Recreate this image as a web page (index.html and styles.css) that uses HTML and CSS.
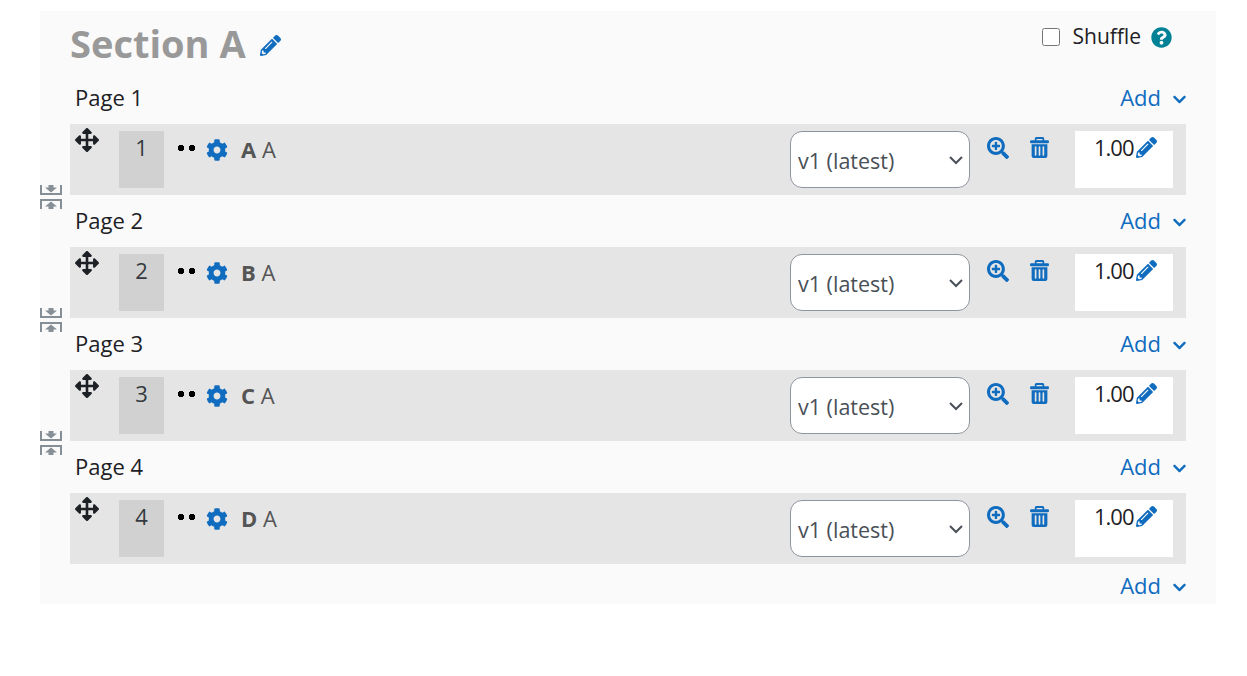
FILE: index.html
```html
<!DOCTYPE html>
<html lang="en">
<head>
    <meta charset="UTF-8">
    <meta name="viewport" content="width=device-width, initial-scale=1.0">
    <title>Section A</title>
    <link rel="stylesheet" href="styles.css">
</head>
<body>
    <svg class="defs" width="0" height="0">
        <symbol id="i-pencil" viewBox="0 0 512 512"><path d="M497.9 142.1l-46.1 46.1c-4.7 4.7-12.3 4.7-17 0l-111-111c-4.7-4.7-4.7-12.3 0-17l46.1-46.1c18.7-18.7 49.1-18.7 67.9 0l60.1 60.1c18.8 18.7 18.8 49.1 0 67.9zM284.2 99.8L21.6 362.4.4 483.9c-2.9 16.4 11.4 30.6 27.8 27.8l121.5-21.3 262.6-262.6c4.7-4.7 4.7-12.3 0-17l-111-111c-4.8-4.7-12.4-4.7-17.1 0zM124.1 339.9c-5.5-5.5-5.5-14.3 0-19.8l154-154c5.5-5.5 14.3-5.5 19.8 0s5.5 14.3 0 19.8l-154 154c-5.5 5.5-14.3 5.5-19.8 0zM88 424h48v36.3l-64.5 11.3-31.1-31.1L51.7 376H88v48z"/></symbol>
        <symbol id="i-cog" viewBox="0 0 512 512"><path d="M487.4 315.7l-42.6-24.6c4.3-23.2 4.3-47 0-70.2l42.6-24.6c4.9-2.8 7.1-8.6 5.5-14-11.1-35.6-30-67.8-54.7-94.6-3.8-4.1-10-5.1-14.8-2.3L380.8 110c-17.9-15.4-38.5-27.3-60.8-35.1V25.8c0-5.6-3.9-10.5-9.4-11.7-36.7-8.2-74.3-7.8-109.2 0-5.5 1.2-9.4 6.1-9.4 11.7V75c-22.2 7.9-42.8 19.8-60.8 35.1L88.7 85.5c-4.9-2.8-11-1.9-14.8 2.3-24.7 26.7-43.6 58.9-54.7 94.6-1.7 5.4.6 11.2 5.5 14L67.3 221c-4.3 23.2-4.3 47 0 70.2l-42.6 24.6c-4.9 2.8-7.1 8.6-5.5 14 11.1 35.6 30 67.8 54.7 94.6 3.8 4.1 10 5.1 14.8 2.3l42.6-24.6c17.9 15.4 38.5 27.3 60.8 35.1v49.2c0 5.6 3.9 10.5 9.4 11.7 36.7 8.2 74.3 7.8 109.2 0 5.5-1.2 9.4-6.1 9.4-11.7v-49.2c22.2-7.9 42.8-19.8 60.8-35.1l42.6 24.6c4.9 2.8 11 1.9 14.8-2.3 24.7-26.7 43.6-58.9 54.7-94.6 1.5-5.5-.7-11.3-5.6-14.1zM256 336c-44.1 0-80-35.9-80-80s35.9-80 80-80 80 35.9 80 80-35.9 80-80 80z"/></symbol>
        <symbol id="i-zoom" viewBox="0 0 512 512"><path d="M304 192v32c0 6.6-5.4 12-12 12h-56v56c0 6.6-5.4 12-12 12h-32c-6.6 0-12-5.4-12-12v-56h-56c-6.6 0-12-5.4-12-12v-32c0-6.6 5.4-12 12-12h56v-56c0-6.6 5.4-12 12-12h32c6.6 0 12 5.4 12 12v56h56c6.6 0 12 5.4 12 12zm201 284.7L476.7 505c-9.4 9.4-24.6 9.4-33.9 0L343 405.3c-4.5-4.5-7-10.6-7-17V372c-35.3 27.6-79.7 44-128 44C93.1 416 0 322.9 0 208S93.1 0 208 0s208 93.1 208 208c0 48.3-16.4 92.7-44 128h16.3c6.4 0 12.5 2.5 17 7l99.7 99.7c9.3 9.4 9.3 24.6 0 34zM344 208c0-75.2-60.8-136-136-136S72 132.8 72 208s60.8 136 136 136 136-60.8 136-136z"/></symbol>
        <symbol id="i-trash" viewBox="0 0 18 20"><path d="M6 0h6a1.5 1.5 0 0 1 1.5 1.5V3H17a1 1 0 0 1 1 1v1a1 1 0 0 1-1 1H1a1 1 0 0 1-1-1V4a1 1 0 0 1 1-1h3.500V1.500A1.500 1.500 0 0 1 6 0zm.200 1.800V3h5.600V1.800zM1.500 7h15v11a2 2 0 0 1-2 2h-11a2 2 0 0 1-2-2zm3 2.500v7.500a.8.8 0 0 0 1.600 0V9.500a.8.8 0 0 0-1.600 0zm3.700 0v7.500a.8.8 0 0 0 1.600 0V9.500a.8.8 0 0 0-1.600 0zm3.700 0v7.500a.8.8 0 0 0 1.600 0V9.500a.8.8 0 0 0-1.600 0z"/></symbol>
        <symbol id="i-help" viewBox="0 0 512 512"><path d="M504 256c0 136.997-111.043 248-248 248S8 392.997 8 256C8 119.083 119.043 8 256 8s248 111.083 248 248zM262.655 90c-54.497 0-89.255 22.957-116.549 63.758-3.536 5.286-2.353 12.415 2.715 16.258l34.699 26.31c5.205 3.947 12.621 3.008 16.665-2.122 17.864-22.658 30.113-35.797 57.303-35.797 20.429 0 45.698 13.148 45.698 32.958 0 14.976-12.363 22.667-32.534 33.976C247.128 238.528 216 254.941 216 296v4c0 6.627 5.373 12 12 12h56c6.627 0 12-5.373 12-12v-1.333c0-28.462 83.186-29.647 83.186-106.667 0-58.002-60.165-102-116.531-102zM256 338c-25.365 0-46 20.635-46 46 0 25.364 20.635 46 46 46s46-20.636 46-46c0-25.365-20.635-46-46-46z"/></symbol>
        <symbol id="i-move" viewBox="0 0 512 512"><path d="M352.201 425.775l-79.196 79.196c-9.373 9.373-24.568 9.373-33.941 0l-79.196-79.196c-15.119-15.119-4.411-40.971 16.971-40.97h51.162L228 284H127.196v51.162c0 21.382-25.851 32.09-40.971 16.971L7.029 272.937c-9.373-9.373-9.373-24.569 0-33.941L86.225 159.8c15.119-15.119 40.971-4.411 40.971 16.971V228H228V127.196h-51.23c-21.382 0-32.09-25.851-16.971-40.971l79.196-79.196c9.373-9.373 24.568-9.373 33.941 0l79.196 79.196c15.119 15.119 4.411 40.971-16.971 40.971h-51.162V228h100.804v-51.162c0-21.382 25.851-32.09 40.97-16.971l79.196 79.196c9.373 9.373 9.373 24.569 0 33.941L425.773 352.2c-15.119 15.119-40.971 4.411-40.97-16.971V284H284v100.804h51.23c21.382 0 32.09 25.851 16.971 40.971z"/></symbol>
        <symbol id="i-chevron" viewBox="0 0 448 512"><path d="M207.029 381.476L12.686 187.132c-9.373-9.373-9.373-24.569 0-33.941l22.667-22.667c9.357-9.357 24.522-9.375 33.901-.04L224 284.505l154.745-154.021c9.379-9.335 24.544-9.317 33.901.04l22.667 22.667c9.373 9.373 9.373 24.569 0 33.941L240.971 381.476c-9.373 9.372-24.569 9.372-33.942 0z"/></symbol>
        <symbol id="i-join" viewBox="0 0 22 24"><path d="M0 0h2v8h18V0h2v10H0zM8.500 0h5v2.500H17l-6 5-6-5h3.500zM0 14h22v10h-2v-8H2v8H0zM11 16.500l6 5h-3.500V24h-5v-2.500H5z"/></symbol>
    </svg>

    <div class="section">
        <div class="section-head">
            <h1>Section A</h1>
            <svg class="icon title-edit"><use href="#i-pencil"/></svg>
            <label class="shuffle">
                <input type="checkbox">
                <span>Shuffle</span>
            </label>
            <svg class="icon help"><use href="#i-help"/></svg>
        </div>

        <div class="page-line">
            <span class="page-name">Page 1</span>
            <a class="add">Add <svg class="icon chevron"><use href="#i-chevron"/></svg></a>
        </div>
        <div class="slot">
            <svg class="icon move"><use href="#i-move"/></svg>
            <div class="num">1</div>
            <span class="dots"></span>
            <svg class="icon cog"><use href="#i-cog"/></svg>
            <div class="name"><b>A</b> A</div>
            <select class="version"><option>v1 (latest)</option></select>
            <svg class="icon zoom"><use href="#i-zoom"/></svg>
            <svg class="icon trash"><use href="#i-trash"/></svg>
            <div class="mark">1.00<svg class="icon mark-edit"><use href="#i-pencil"/></svg></div>
        </div>

        <div class="page-line">
            <svg class="join"><use href="#i-join"/></svg>
            <span class="page-name">Page 2</span>
            <a class="add">Add <svg class="icon chevron"><use href="#i-chevron"/></svg></a>
        </div>
        <div class="slot">
            <svg class="icon move"><use href="#i-move"/></svg>
            <div class="num">2</div>
            <span class="dots"></span>
            <svg class="icon cog"><use href="#i-cog"/></svg>
            <div class="name"><b>B</b> A</div>
            <select class="version"><option>v1 (latest)</option></select>
            <svg class="icon zoom"><use href="#i-zoom"/></svg>
            <svg class="icon trash"><use href="#i-trash"/></svg>
            <div class="mark">1.00<svg class="icon mark-edit"><use href="#i-pencil"/></svg></div>
        </div>

        <div class="page-line">
            <svg class="join"><use href="#i-join"/></svg>
            <span class="page-name">Page 3</span>
            <a class="add">Add <svg class="icon chevron"><use href="#i-chevron"/></svg></a>
        </div>
        <div class="slot">
            <svg class="icon move"><use href="#i-move"/></svg>
            <div class="num">3</div>
            <span class="dots"></span>
            <svg class="icon cog"><use href="#i-cog"/></svg>
            <div class="name"><b>C</b> A</div>
            <select class="version"><option>v1 (latest)</option></select>
            <svg class="icon zoom"><use href="#i-zoom"/></svg>
            <svg class="icon trash"><use href="#i-trash"/></svg>
            <div class="mark">1.00<svg class="icon mark-edit"><use href="#i-pencil"/></svg></div>
        </div>

        <div class="page-line">
            <svg class="join"><use href="#i-join"/></svg>
            <span class="page-name">Page 4</span>
            <a class="add">Add <svg class="icon chevron"><use href="#i-chevron"/></svg></a>
        </div>
        <div class="slot">
            <svg class="icon move"><use href="#i-move"/></svg>
            <div class="num">4</div>
            <span class="dots"></span>
            <svg class="icon cog"><use href="#i-cog"/></svg>
            <div class="name"><b>D</b> A</div>
            <select class="version"><option>v1 (latest)</option></select>
            <svg class="icon zoom"><use href="#i-zoom"/></svg>
            <svg class="icon trash"><use href="#i-trash"/></svg>
            <div class="mark">1.00<svg class="icon mark-edit"><use href="#i-pencil"/></svg></div>
        </div>

        <div class="last-line">
            <a class="add">Add <svg class="icon chevron"><use href="#i-chevron"/></svg></a>
        </div>
    </div>
</body>
</html>
```

FILE: styles.css
```css
* {
    box-sizing: border-box;
}

body {
    margin: 0;
    padding: 11px 31px 0 40px;
    background: #fff;
    color: #1d2125;
    font-family: "Open Sans", "Noto Sans", sans-serif;
    font-size: 22px;
}

.defs {
    position: absolute;
}

.icon {
    display: block;
    flex: none;
    fill: #0f6cbf;
}

.section {
    background: #fafafa;
    padding: 0 30px;
    height: 593px;
}

.section-head {
    display: flex;
    height: 61px;
    align-items: flex-start;
}

h1 {
    margin: 8px 0 0;
    font-size: 38px;
    line-height: 48px;
    font-weight: 700;
    color: #999;
}

.title-edit {
    width: 21px;
    height: 21px;
    margin: 24px 0 0 14px;
}

.shuffle {
    display: flex;
    align-items: center;
    margin: 11px 0 0 auto;
    font-size: 21px;
}

.shuffle input {
    width: 18px;
    height: 18px;
    margin: 2px 13px 0 0;
}

.help {
    width: 21px;
    height: 21px;
    margin: 16px 14px 0 10px;
    fill: #008196;
}

.page-line {
    position: relative;
    display: flex;
    align-items: center;
    justify-content: space-between;
    height: 52px;
    padding: 0 0 0 5px;
}

.page-name {
    padding-bottom: 2px;
}

.join {
    position: absolute;
    left: -30px;
    top: -10px;
    width: 22px;
    height: 24px;
    fill: #868e96;
}

.add {
    display: flex;
    align-items: center;
    padding-bottom: 2px;
    color: #0f6cbf;
}

.chevron {
    width: 13px;
    height: 15px;
    margin: 4px 0 0 12px;
}

.slot {
    display: flex;
    align-items: flex-start;
    height: 71px;
    padding: 7px 13px 7px 5px;
    background: #e5e5e5;
}

.move {
    width: 24px;
    height: 24px;
    margin: -3px 20px 0 0;
    fill: #1d2125;
}

.num {
    width: 45px;
    height: 57px;
    background: #d1d1d1;
    text-align: center;
    line-height: 33px;
    color: #343a40;
}

.dots {
    width: 17px;
    height: 6px;
    margin: 14px 0 0 14px;
    background: radial-gradient(circle at 3px 3px, #000 3px, transparent 3.5px), radial-gradient(circle at 14px 3px, #000 3px, transparent 3.5px);
}

.cog {
    width: 22px;
    height: 22px;
    margin: 8px 0 0 11px;
}

.name {
    flex: 1;
    margin-left: 13px;
    line-height: 36px;
    color: #555;
}

.version {
    width: 180px;
    height: 57px;
    padding: 2px 0 0 7px;
    border: 1px solid #8f959e;
    border-radius: 12px;
    background: #fff url("data:image/svg+xml,%3Csvg xmlns='http://www.w3.org/2000/svg' viewBox='0 0 16 10'%3E%3Cpath d='M2 2l6 6 6-6' fill='none' stroke='%23495057' stroke-width='2'/%3E%3C/svg%3E") no-repeat right 5px center / 16px 10px;
    color: #495057;
    font-family: inherit;
    font-size: 21.5px;
    appearance: none;
}

.zoom {
    width: 22px;
    height: 22px;
    margin: 6px 0 0 17px;
}

.trash {
    width: 19px;
    height: 21px;
    margin: 6px 0 0 21px;
}

.mark {
    display: flex;
    align-items: flex-start;
    width: 98px;
    height: 57px;
    margin-left: 26px;
    padding-left: 19px;
    background: #fff;
    line-height: 32px;
    letter-spacing: -1px;
}

.mark-edit {
    width: 21px;
    height: 21px;
    margin: 6px 0 0 2px;
}

.last-line {
    display: flex;
    justify-content: flex-end;
    align-items: center;
    height: 44px;
}
```
